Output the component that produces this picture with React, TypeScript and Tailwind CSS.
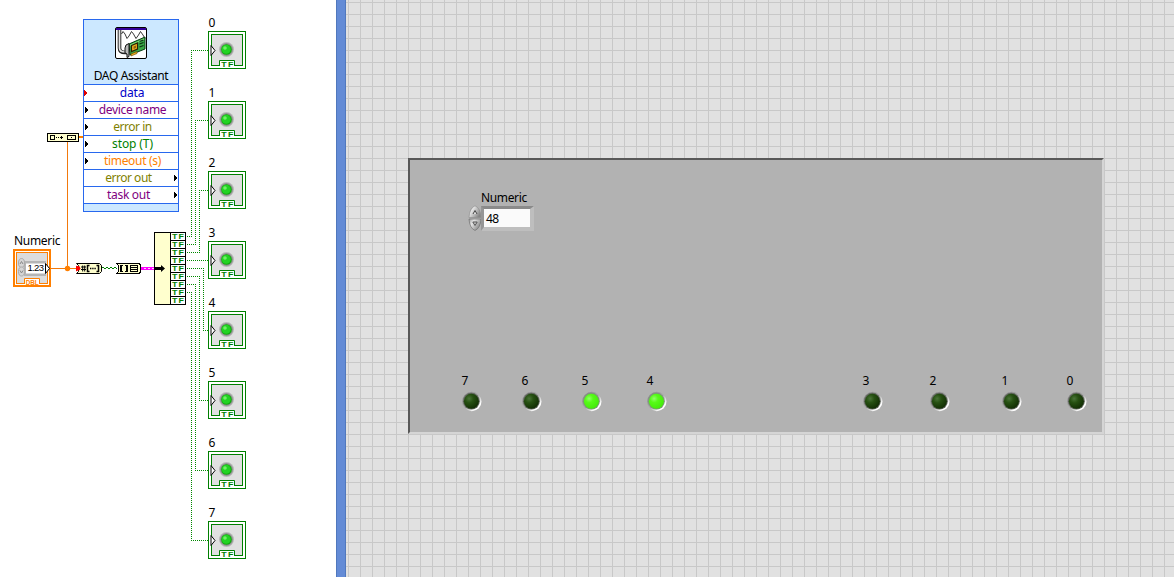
import React from 'react';

type Wire = { out: number; bus: number; to: number };

const wires: Wire[] = [
  { out: 236, bus: 191, to: 50 },
  { out: 244, bus: 195, to: 120 },
  { out: 252, bus: 199, to: 190 },
  { out: 260, bus: 203, to: 260 },
  { out: 268, bus: 203, to: 330 },
  { out: 276, bus: 199, to: 400 },
  { out: 284, bus: 195, to: 470 },
  { out: 292, bus: 191, to: 540 },
];

function Wires() {
  return (
    <svg className="absolute left-0 top-0" width="336" height="577" fill="none" shapeRendering="crispEdges">
      {wires.map((w) => (
        <path
          key={w.to}
          d={`M187 ${w.out + 0.5}H${w.bus + 1}M${w.bus + 0.5} ${Math.min(w.out, w.to)}V${Math.max(w.out, w.to)}M${w.bus} ${w.to + 0.5}H208`}
          stroke="#008800"
          strokeDasharray="1 1"
        />
      ))}
      <path d="M51 268.5H77M67.5 268V142" stroke="#f2790c" />
      <path d="M79 137H84" stroke="#ff7f00" strokeWidth="2" />
      <path d="M102 267.5H117" stroke="#007f00" strokeDasharray="2 2" />
      <path d="M104 268.5H117" stroke="#007f00" strokeDasharray="2 2" />
      <path d="M141 268.5H154" stroke="#ff00ff" strokeWidth="3" />
      <path d="M144 268.5H154" stroke="#ffd0ff" strokeDasharray="2 2" />
      <circle cx="67.5" cy="268.5" r="2.7" fill="#ff7f00" shapeRendering="auto" />
    </svg>
  );
}

function DaqIcon() {
  return (
    <svg width="32" height="32" viewBox="0 0 32 32">
      <rect x=".5" y=".5" width="31" height="31" rx="1.5" fill="#fff" stroke="#000" />
      <path d="M1 1H31V3H1Z" fill="#33009a" />
      <path d="M6.5 7L8 4.5L10 7L12 11.5L14 9L16.5 4.5L18.5 7L21 11.5L23.5 8L25.5 4.5L28 8L30 11.5" fill="none" stroke="#222" strokeWidth=".9" />
      <path d="M4.5 3V21Q4.5 25.5 10 25.5H12" fill="none" stroke="#222" strokeWidth="3.6" />
      <path d="M4.5 3V21Q4.5 25 10 25H12" fill="none" stroke="#e2e2e2" strokeWidth="1.7" />
      <path d="M14 17L30 10V22L15 28Z" fill="#39a845" stroke="#073d12" strokeWidth="1" />
      <path d="M15 17.5L29 11.5V13L15 19Z" fill="#7fdd7a" />
      <path d="M11 18L14 16.5V29.5L12 30.5V27L10 26V21Z" fill="#b8b8b8" stroke="#111" strokeWidth="1" />
      <path d="M16.5 18.5L22.5 16V22L16.5 24.5Z" fill="#f0b020" stroke="#2a2000" strokeWidth="1.2" />
      <path d="M18.5 19.5L21 18.5V21L18.5 22Z" fill="#8b6510" />
      <path d="M24.5 14.5L28.5 13M24.5 17L28.5 15.5M24.5 20L28.5 18.5" stroke="#092b10" strokeWidth="1.1" />
      <path d="M16 27L22 24.5V26.5L16 29Z" fill="#f0b020" stroke="#5a3c00" strokeWidth=".6" />
    </svg>
  );
}

const daqRows = [
  { label: 'data', color: 'text-[#0000c8]', tracking: 'tracking-[-0.2px]', side: 'in', red: true },
  { label: 'device name', color: 'text-[#800080]', tracking: 'tracking-[-0.3px]', side: 'in' },
  { label: 'error in', color: 'text-[#7f7f00]', tracking: 'tracking-[-0.45px]', side: 'in' },
  { label: 'stop (T)', color: 'text-[#007f00]', tracking: 'tracking-[-0.1px]', side: 'in' },
  { label: 'timeout (s)', color: 'text-[#ff7f00]', tracking: 'tracking-[-0.3px]', side: 'in' },
  { label: 'error out', color: 'text-[#7f7f00]', tracking: 'tracking-[-0.5px]', side: 'out' },
  { label: 'task out', color: 'text-[#800080]', tracking: 'tracking-[-0.3px]', side: 'out' },
];

function DaqAssistant() {
  return (
    <div className="absolute left-[83px] top-[19px] flex h-[193px] w-24 flex-col border border-[#2868ee] bg-[#cce8ff]">
      <div className="flex h-16 flex-col items-center pt-[7px]">
        <DaqIcon />
        <span className="mt-[9px] whitespace-nowrap text-[12px] leading-4 tracking-[-0.35px]">DAQ Assistant</span>
      </div>
      {daqRows.map((r) => (
        <div
          key={r.label}
          className="flex h-[17px] shrink-0 items-center border-t border-[#2868ee] bg-white"
        >
          <svg width="4" height="6" className={r.red ? '-ml-px mr-px shrink-0' : 'mr-px shrink-0'} shapeRendering="crispEdges">
            {r.side === 'in' && <path d="M1 0V6L4 3Z" fill={r.red ? '#e00000' : '#000'} />}
          </svg>
          <span className={`grow whitespace-nowrap text-center text-[12px] leading-4 ${r.side === 'in' ? 'pl-0.5' : 'pr-1.5'} ${r.color} ${r.tracking}`}>{r.label}</span>
          <svg width="4" height="6" className="shrink-0" shapeRendering="crispEdges">
            {r.side === 'out' && <path d="M0 0V6L3.5 3Z" fill="#000" />}
          </svg>
        </div>
      ))}
      <div className="h-2 border-t border-[#2868ee]" />
    </div>
  );
}

const terminalTops = [
  'top-[15px]', 'top-[85px]', 'top-[155px]', 'top-[225px]',
  'top-[295px]', 'top-[365px]', 'top-[435px]', 'top-[505px]',
];

function LedTerminal({ n }: { n: number }) {
  return (
    <div className={`absolute left-[208px] ${terminalTops[n]}`}>
      <div className="h-4 pl-[0.5px] text-[12px] leading-4">{n}</div>
      <svg className="block" width="38" height="38">
        <rect x=".5" y=".5" width="37" height="37" fill="#fff" stroke="#007f00" />
        <rect x="3.5" y="3.5" width="31" height="31" fill="#e0e0e0" stroke="#007f00" />
        <circle cx="18.5" cy="18.5" r="7.5" fill="#b8b8b8" />
        <circle cx="18.5" cy="18.5" r="6.5" fill="#929292" />
        <circle cx="18.5" cy="18.5" r="5.3" fill="#12a80f" />
        <circle cx="18.2" cy="18.2" r="4.5" fill="#22d322" />
        <circle cx="17" cy="17" r="1.8" fill="#70ef68" />
        <path d="M3 14.5V24.5L7 19.5Z" fill="#fff" stroke="#000" strokeWidth="1" />
        <path d="M12 30H26V37H12Z" fill="#fff" />
        <path d="M11.5 35V29.5H26.5V35" fill="none" stroke="#007f00" />
        <text x="13.3" y="36" fontSize="7" fontWeight="bold" fontFamily="Liberation Sans" textLength="5.4" lengthAdjust="spacingAndGlyphs" fill="#007f00">T</text>
        <text x="20" y="36" fontSize="7" fontWeight="bold" fontFamily="Liberation Sans" textLength="5.4" lengthAdjust="spacingAndGlyphs" fill="#007f00">F</text>
      </svg>
    </div>
  );
}

function NumericTerminal() {
  return (
    <div className="absolute left-[13px] top-[233px]">
      <div className="h-4 pl-px text-[12px] leading-4 tracking-[-0.3px]">Numeric</div>
      <svg className="block" width="38" height="38">
        <rect x="1" y="1" width="36" height="36" fill="#fff" stroke="#ff7f00" strokeWidth="2" />
        <rect x="3.5" y="3.5" width="31" height="31" fill="#dcdcdc" stroke="#ff7f00" />
        <path d="M11 12H33V27H11Z" fill="#b5b5b5" />
        <rect x="13" y="14.5" width="20" height="10" fill="#fff" />
        <ellipse cx="8.5" cy="14" rx="3" ry="4.5" fill="#d5d5d5" stroke="#aaa" />
        <ellipse cx="8.5" cy="22.5" rx="3" ry="4.5" fill="#d5d5d5" stroke="#aaa" />
        <path d="M7 15L8.5 12.5L10 15M7 21.5L8.5 24L10 21.5" fill="none" stroke="#888" />
        <text x="14.5" y="22.4" fontSize="9.5" fontFamily="Liberation Sans" textLength="16.5" fill="#000">1.23</text>
        <path d="M32.5 14.5V24.5L36.5 19.5Z" fill="#fff" stroke="#000" />
        <path d="M12 30H27V36H12Z" fill="#fff" />
        <path d="M11.5 35V29.5H26.5V35" fill="none" stroke="#ff7f00" />
        <text x="12.7" y="36" fontSize="7" fontWeight="bold" fontFamily="Liberation Sans" textLength="13" lengthAdjust="spacingAndGlyphs" fill="#ff7f00">DBL</text>
      </svg>
    </div>
  );
}

function BuildArrayNode() {
  return (
    <svg className="absolute left-[47px] top-[133px]" width="32" height="9" shapeRendering="crispEdges">
      <rect x=".5" y=".5" width="31" height="8" fill="#ffffce" stroke="#000" />
      <path d="M3.5 2.5H7.5V6.5H3.5ZM20.5 2.5H28.5V6.5H20.5ZM9 4.5H10M11 4.5H12M13 4.5H16M14.5 3V6M24 4.5H25" fill="none" stroke="#000" />
    </svg>
  );
}

function NumberToArrayNode() {
  return (
    <svg className="absolute left-[76px] top-[263px]" width="27" height="11">
      <path d="M.5 .5H23.5L25.5 2.5V8.5L23.5 10.5H.5L2.5 8.5V2.5Z" fill="#ffffce" stroke="#000" />
      <path d="M0 2.5L4.5 5.5L0 8.5Z" fill="red" />
      <circle cx="2" cy="5.3" r="2.3" fill="red" />
      <path d="M5 4H10M5 6.5H10M6.7 2.5V8.5M8.7 2.5V8.5" stroke="#000" />
      <path d="M13.5 2.5H11.5V8.5H13.5M20.5 2.5H22.5V8.5H20.5" stroke="#000" strokeWidth="1.5" fill="none" />
      <path d="M14 5.5H20" stroke="#000" strokeWidth="1.6" strokeDasharray="1.4 .8" />
    </svg>
  );
}

function ArrayToClusterNode() {
  return (
    <svg className="absolute left-[116px] top-[263px]" width="26" height="11" shapeRendering="crispEdges">
      <path d="M.5 .5H23.5L24.5 2.5V8.5L23.5 10.5H.5L2.5 8.5V2.5Z" fill="#ffffce" stroke="#000" />
      <path d="M7 2.5H5V8.5H7M9 2.5H11V8.5H9" fill="none" stroke="#000" strokeWidth="1.5" />
      <path d="M14.5 2.5H21.5V8.5H14.5ZM14 4.5H21M14 6.5H21" fill="none" stroke="#000" />
    </svg>
  );
}

function Unbundle() {
  return (
    <svg className="absolute left-[154px] top-[232px]" width="32" height="73">
      <rect x=".5" y=".5" width="31" height="72" fill="#ffffce" stroke="#000" />
      {[0, 1, 2, 3, 4, 5, 6, 7, 8].map((i) => (
        <g key={i}>
          <rect x="16.5" y={i * 8 + 0.5} width="15" height="8" fill="#fff" stroke="#000" />
          <text x="18" y={i * 8 + 7} fontSize="7" fontWeight="bold" fontFamily="Liberation Sans" textLength="5.4" lengthAdjust="spacingAndGlyphs" fill="#007f00">T</text>
          <text x="24.5" y={i * 8 + 7} fontSize="7" fontWeight="bold" fontFamily="Liberation Sans" textLength="5.4" lengthAdjust="spacingAndGlyphs" fill="#007f00">F</text>
        </g>
      ))}
      <path d="M0 35H7V33L11 36.5L7 40V38H0Z" fill="#000" />
    </svg>
  );
}

function PanelLed({ label, on, place }: { label: string; on?: boolean; place: string }) {
  return (
    <div className={`absolute w-6 ${place}`}>
      <div className="h-4 pl-[1.5px] text-[12px] leading-4">{label}</div>
      <svg className="block" width="24" height="24">
        <circle cx="11.8" cy="12.5" r="9.7" fill="url(#bezel)" />
        <circle cx="11.4" cy="12.2" r="8.4" fill={on ? '#7d957a' : '#60665d'} />
        <circle cx="11.4" cy="12.2" r="7.5" fill={on ? 'url(#lit)' : 'url(#unlit)'} />
      </svg>
    </div>
  );
}

const panelLeds = [
  { label: '7', place: 'left-[50px] top-[213px]' },
  { label: '6', place: 'left-[110px] top-[213px]' },
  { label: '5', place: 'left-[170px] top-[213px]', on: true },
  { label: '4', place: 'left-[235px] top-[213px]', on: true },
  { label: '3', place: 'left-[451px] top-[213px]' },
  { label: '2', place: 'left-[518px] top-[213px]' },
  { label: '1', place: 'left-[590px] top-[213px]' },
  { label: '0', place: 'left-[655px] top-[213px]' },
];

function Gradients() {
  return (
    <svg className="absolute" width="0" height="0">
      <defs>
        <linearGradient id="bezel" x1="0.1" y1="0.1" x2="0.9" y2="0.9">
          <stop offset="0" stopColor="#8a8a8a" />
          <stop offset=".5" stopColor="#aaa" />
          <stop offset=".85" stopColor="#fff" />
        </linearGradient>
        <radialGradient id="unlit" cx=".35" cy=".33" r=".7">
          <stop offset="0" stopColor="#4a7538" />
          <stop offset=".4" stopColor="#265012" />
          <stop offset="1" stopColor="#122f04" />
        </radialGradient>
        <radialGradient id="lit" cx=".35" cy=".33" r=".75">
          <stop offset="0" stopColor="#91ff6a" />
          <stop offset=".35" stopColor="#56fb18" />
          <stop offset="1" stopColor="#42e80a" />
        </radialGradient>
        <linearGradient id="spin" x1="0" y1="0" x2="1" y2=".6">
          <stop offset="0" stopColor="#9a9a9a" />
          <stop offset=".35" stopColor="#e4e4e4" />
          <stop offset="1" stopColor="#858585" />
        </linearGradient>
      </defs>
    </svg>
  );
}

function NumericControl() {
  return (
    <div className="absolute left-[58px] top-[30px]">
      <div className="h-4 pl-[13px] text-[12px] leading-4 tracking-[-0.35px]">Numeric</div>
      <div className="flex">
        <svg width="14" height="26" className="-mt-px shrink-0">
          <path d="M1 12.5Q1.5 3 7 .8Q12.5 3 13 12.5Z" fill="url(#spin)" stroke="#888" strokeWidth=".6" />
          <path d="M1 14H13Q12.5 23 7 25.5Q1.5 23 1 14Z" fill="url(#spin)" stroke="#666" strokeWidth=".6" />
          <path d="M5 9L7 5.5L9 9" fill="#ddd" stroke="#444" />
          <path d="M4.8 17H9.2L7 20.5Z" fill="#c8c8c8" stroke="#555" />
        </svg>
        <div className="-ml-px h-[25px] w-[53px] border-t-[3px] border-r-[4px] border-b-[4px] border-l-[3px] border-t-[#8a8a8a] border-r-[#bebebe] border-b-[#bebebe] border-l-[#969696] bg-[#fafafa] pl-[2px] text-[12px] leading-[19px] tracking-[-0.6px]">
          48
        </div>
      </div>
    </div>
  );
}

export default function App() {
  return (
    <div className="flex h-[577px] w-[1174px] overflow-hidden bg-white font-['Noto_Sans','Open_Sans',sans-serif] text-black">
      <section className="relative h-full w-[336px] shrink-0 bg-white">
        <Wires />
        <DaqAssistant />
        <BuildArrayNode />
        <NumericTerminal />
        <NumberToArrayNode />
        <ArrayToClusterNode />
        <Unbundle />
        {[0, 1, 2, 3, 4, 5, 6, 7].map((n) => (
          <LedTerminal key={n} n={n} />
        ))}
      </section>
      <div className="w-[10px] shrink-0 border-x border-[#5078bd] bg-[#638bd6]" />
      <section className="grow bg-[#e1e1e1] bg-[linear-gradient(to_right,#c8c8c8_1px,transparent_1px),linear-gradient(to_bottom,#c8c8c8_1px,transparent_1px)] bg-[size:12px_12px] bg-[position:2px_2px] pl-[62px] pt-[158px]">
        <Gradients />
        <div className="relative h-[276px] w-[696px] border-2 border-t-[#585858] border-r-[#d5d5d5] border-b-[#d5d5d5] border-l-[#585858] bg-[#b2b2b2]">
          <NumericControl />
          {panelLeds.map((led) => (
            <PanelLed key={led.label} {...led} />
          ))}
        </div>
      </section>
    </div>
  );
}
